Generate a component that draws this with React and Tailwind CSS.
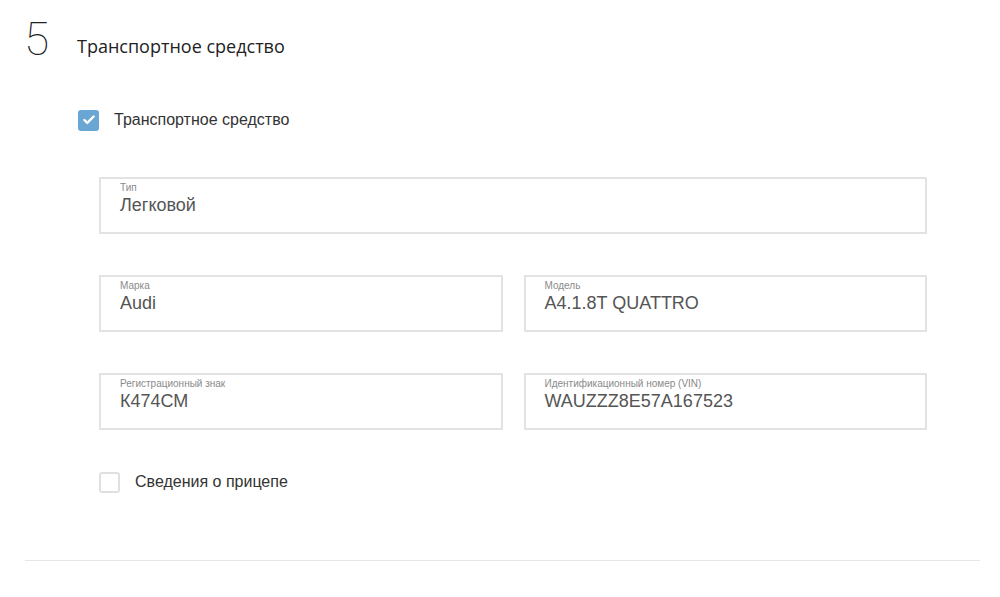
import { Check } from "lucide-react";

function Field({ label, value, className = "" }) {
  return (
    <div className={`h-[57px] border-2 border-[#e3e3e3] pl-[19px] pt-[2px] ${className}`}>
      <p className="text-[10px] leading-[14px] text-[#8a8a8a]">{label}</p>
      <p className="text-[18px] leading-[20px] text-[#555]">{value}</p>
    </div>
  );
}

function Box({ checked }) {
  return checked ? (
    <span className="flex h-[21px] w-[21px] items-center justify-center rounded-[3px] bg-[#69a6d3]">
      <Check size={14} strokeWidth={4} className="text-white" />
    </span>
  ) : (
    <span className="h-[21px] w-[21px] rounded-[3px] border-2 border-[#e0e0e0] bg-white" />
  );
}

export default function App() {
  return (
    <div className="h-[597px] w-[1000px] bg-white font-['Liberation_Sans',Arial,sans-serif]">
      <div className="flex items-center pl-[24px] pt-[12px]">
        <span className="w-[53px] font-['Roboto',sans-serif] text-[46px] font-thin leading-[54px] text-[#222]">5</span>
        <h2 className="mt-[14px] font-['Open_Sans',sans-serif] text-[18px] text-[#222]">Транспортное средство</h2>
      </div>

      <label className="ml-[78px] mt-[42px] flex items-center gap-[15px]">
        <Box checked />
        <span className="text-[16px] text-[#333]">Транспортное средство</span>
      </label>

      <div className="ml-[99px] mr-[73px] mt-[45px] flex flex-col gap-[41px]">
        <Field label="Тип" value="Легковой" />
        <div className="grid grid-cols-2 gap-[21px]">
          <Field label="Марка" value="Audi" />
          <Field label="Модель" value="A4.1.8T QUATTRO" />
        </div>
        <div className="grid grid-cols-2 gap-[21px]">
          <Field label="Регистрационный знак" value="К474СМ" />
          <Field label="Идентификационный номер (VIN)" value="WAUZZZ8E57A167523" />
        </div>
      </div>

      <label className="ml-[99px] mt-[40px] flex items-center gap-[15px]">
        <Box />
        <span className="text-[16px] text-[#333]">Сведения о прицепе</span>
      </label>

      <div className="ml-[25px] mr-[20px] mt-[66px] border-t border-[#e6e6e6]" />
    </div>
  );
}
